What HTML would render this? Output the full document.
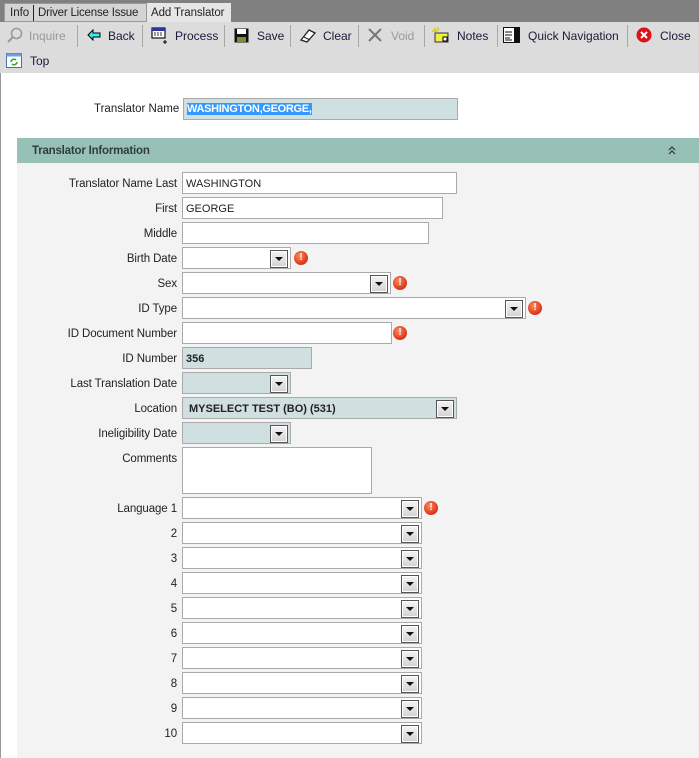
<!DOCTYPE html>
<html><head><meta charset="utf-8"><style>
*{margin:0;padding:0;box-sizing:border-box}
body{width:699px;height:758px;position:relative;background:#fff;font-family:"Liberation Sans",Tahoma,sans-serif;font-size:11.5px;color:#222;overflow:hidden}
.a{position:absolute;white-space:nowrap}
.tb{color:#1a1a3a;font-size:12px;margin-top:1px}
.sep{position:absolute;top:25px;width:1px;height:22px;background:#a8a8a8}
.lbl{position:absolute;right:522px;text-align:right;white-space:nowrap;color:#222;letter-spacing:-0.1px;margin-top:2px}
.f{position:absolute;height:22px;border:1px solid #aaa;background:#fff;padding:5px 0 0 3px;white-space:nowrap;font-size:11px}
.ro{background:#d0dfdf}
.dd::after{content:"";position:absolute;right:2px;top:2px;width:16px;height:16px;border:1px solid #555;box-shadow:inset 0 0 0 1px #fff;background:linear-gradient(#f4f4f4,#d2d2d2)}
.dd::before{content:"";position:absolute;right:7px;top:9px;border-left:4px solid transparent;border-right:4px solid transparent;border-top:4px solid #111;z-index:2}
.w{position:absolute;width:14px;height:14px;border-radius:50%;background:radial-gradient(circle at 40% 35%,#ff8a5a,#d9321a 70%);color:#fff;font-weight:bold;font-size:10px;text-align:center;line-height:14px}
</style></head><body>
<div class="a" style="left:0;top:0;width:699px;height:22px;background:#808080"></div>
<div class="a" style="left:4px;top:3px;width:143px;height:19px;background:#d4d4d4;border:1px solid #999"></div>
<div class="a" style="left:147px;top:3px;width:84px;height:20px;background:#e6e6e6"></div>
<div class="a" style="left:10px;top:7px;color:#222;font-size:11.5px">Info</div>
<div class="a" style="left:33px;top:5px;width:1px;height:16px;background:#222"></div>
<div class="a" style="left:38px;top:7px;color:#222;font-size:11.5px;letter-spacing:-0.2px">Driver License Issue</div>
<div class="a" style="left:151px;top:7px;color:#222;font-size:11.5px;letter-spacing:-0.1px">Add Translator</div>
<div class="a" style="left:0;top:22px;width:699px;height:51px;background:#dcdcdc"></div>
<div class="a" style="left:0;top:73px;width:1px;height:685px;background:#999"></div>
<svg class="a" style="left:7px;top:27px" width="16" height="16"><circle cx="9.5" cy="6.5" r="5" fill="none" stroke="#999" stroke-width="1.5"/><line x1="6" y1="10" x2="1" y2="15" stroke="#999" stroke-width="2"/></svg>
<div class="a tb" style="left:29px;top:28px;color:#999">Inquire</div>
<div class="sep" style="left:77px"></div>
<svg class="a" style="left:87px;top:29px" width="14" height="12"><path d="M1 6 L6 1 V4 H13 V8 H6 V11 Z" fill="#3ee" stroke="#000" stroke-width="1"/></svg>
<div class="a tb" style="left:108px;top:28px">Back</div>
<div class="sep" style="left:142px"></div>
<svg class="a" style="left:151px;top:27px" width="18" height="18"><rect x="1" y="1" width="13" height="10" fill="#fff" stroke="#112" stroke-width="1.2"/><rect x="1" y="1" width="13" height="3" fill="#339"/><path d="M3 6h2M6 6h2M9 6h2M3 8h2M6 8h2M9 8h2" stroke="#333"/><path d="M14 13v4M12 15h4" stroke="#000"/></svg>
<div class="a tb" style="left:175px;top:28px">Process</div>
<div class="sep" style="left:224px"></div>
<svg class="a" style="left:234px;top:28px" width="15" height="15"><rect x="0.5" y="0.5" width="14" height="14" fill="#111"/><rect x="3" y="1" width="9" height="5" fill="#fff"/><rect x="3" y="9" width="9" height="5" fill="#883"/></svg>
<div class="a tb" style="left:257px;top:28px">Save</div>
<div class="sep" style="left:290px"></div>
<svg class="a" style="left:299px;top:28px" width="18" height="15"><path d="M2 12 L10 2 L16 5 L8 14 Z" fill="#fff" stroke="#222" stroke-width="1.3"/><path d="M5 9 L11 12" stroke="#222"/></svg>
<div class="a tb" style="left:323px;top:28px">Clear</div>
<div class="sep" style="left:358px"></div>
<svg class="a" style="left:368px;top:28px" width="14" height="14"><path d="M1 1L13 13M13 1L1 13" stroke="#777" stroke-width="2"/></svg>
<div class="a tb" style="left:391px;top:28px;color:#999">Void</div>
<div class="sep" style="left:424px"></div>
<svg class="a" style="left:432px;top:27px" width="17" height="17"><rect x="3" y="6" width="13" height="9" fill="#ee4" stroke="#333"/><path d="M2 1L5 5M6 0V4M0 4H4" stroke="#cc0" stroke-width="1.3"/><rect x="11" y="10" width="4" height="4" fill="#fff" stroke="#000"/></svg>
<div class="a tb" style="left:457px;top:28px">Notes</div>
<div class="sep" style="left:497px"></div>
<svg class="a" style="left:503px;top:27px" width="18" height="17"><rect x="0.5" y="0.5" width="16" height="15" fill="#fff" stroke="#111"/><rect x="11" y="1" width="5" height="14" fill="#111"/><path d="M2 5h7M2 8h7M2 11h5M2 13h7" stroke="#111"/></svg>
<div class="a tb" style="left:528px;top:28px;letter-spacing:0px">Quick Navigation</div>
<div class="sep" style="left:627px"></div>
<svg class="a" style="left:636px;top:27px" width="16" height="16"><circle cx="8" cy="8" r="7.5" fill="#e01018"/><path d="M5 5L11 11M11 5L5 11" stroke="#fff" stroke-width="2"/></svg>
<div class="a tb" style="left:660px;top:28px">Close</div>
<svg class="a" style="left:6px;top:53px" width="16" height="15"><rect x="0.5" y="0.5" width="15" height="14" fill="#fff" stroke="#4870b0"/><rect x="0.5" y="0.5" width="15" height="3" fill="#6fa0e0"/><path d="M5 9a3 3 0 0 1 5-2M11 9a3 3 0 0 1-5 2" stroke="#3a3" stroke-width="1.6" fill="none"/></svg>
<div class="a tb" style="left:30px;top:53px">Top</div>

<div class="a" style="left:94px;top:103px">Translator Name</div>
<div class="f ro" style="left:183px;top:98px;width:275px;padding-top:4px"><span style="background:#3399ff;color:#fff;font-weight:bold;font-size:11px;letter-spacing:-0.3px">WASHINGTON,GEORGE,</span></div>

<div class="a" style="left:17px;top:138px;width:682px;height:620px;background:#f3f3f3"></div>
<div class="a" style="left:17px;top:138px;width:682px;height:25px;background:#97c0b6"></div>
<div class="a" style="left:32px;top:145px;font-weight:bold;color:#2f3f37;letter-spacing:-0.2px">Translator Information</div>
<svg class="a" style="left:668px;top:146px" width="8" height="9"><path d="M1 4L4 1L7 4M1 8L4 5L7 8" stroke="#333" fill="none" stroke-width="1.2"/></svg>

<div class="lbl" style="top:176px">Translator Name Last</div><div class="f" style="left:182px;top:172px;width:275px">WASHINGTON</div>
<div class="lbl" style="top:201px">First</div><div class="f" style="left:182px;top:197px;width:261px">GEORGE</div>
<div class="lbl" style="top:226px">Middle</div><div class="f" style="left:182px;top:222px;width:247px"></div>
<div class="lbl" style="top:251px">Birth Date</div><div class="f dd" style="left:182px;top:247px;width:109px"></div><div class="w" style="left:294px;top:251px">!</div>
<div class="lbl" style="top:276px">Sex</div><div class="f dd" style="left:182px;top:272px;width:209px"></div><div class="w" style="left:393px;top:276px">!</div>
<div class="lbl" style="top:301px">ID Type</div><div class="f dd" style="left:182px;top:297px;width:344px"></div><div class="w" style="left:528px;top:301px">!</div>
<div class="lbl" style="top:326px">ID Document Number</div><div class="f" style="left:182px;top:322px;width:210px"></div><div class="w" style="left:393px;top:326px">!</div>
<div class="lbl" style="top:351px">ID Number</div><div class="f ro" style="left:182px;top:347px;width:130px;font-weight:bold">356</div>
<div class="lbl" style="top:376px">Last Translation Date</div><div class="f dd ro" style="left:182px;top:372px;width:109px"></div>
<div class="lbl" style="top:401px">Location</div><div class="f dd ro" style="left:182px;top:397px;width:275px;font-weight:bold;padding-left:6px">MYSELECT TEST (BO) (531)</div>
<div class="lbl" style="top:426px">Ineligibility Date</div><div class="f dd ro" style="left:182px;top:422px;width:109px"></div>
<div class="lbl" style="top:451px">Comments</div><div class="f" style="left:182px;top:447px;width:190px;height:47px"></div>
<div class="lbl" style="top:501px">Language 1</div><div class="f dd" style="left:182px;top:497px;width:240px"></div><div class="w" style="left:424px;top:501px">!</div>
<div class="lbl" style="top:526px">2</div><div class="f dd" style="left:182px;top:522px;width:240px"></div>
<div class="lbl" style="top:551px">3</div><div class="f dd" style="left:182px;top:547px;width:240px"></div>
<div class="lbl" style="top:576px">4</div><div class="f dd" style="left:182px;top:572px;width:240px"></div>
<div class="lbl" style="top:601px">5</div><div class="f dd" style="left:182px;top:597px;width:240px"></div>
<div class="lbl" style="top:626px">6</div><div class="f dd" style="left:182px;top:622px;width:240px"></div>
<div class="lbl" style="top:651px">7</div><div class="f dd" style="left:182px;top:647px;width:240px"></div>
<div class="lbl" style="top:676px">8</div><div class="f dd" style="left:182px;top:672px;width:240px"></div>
<div class="lbl" style="top:701px">9</div><div class="f dd" style="left:182px;top:697px;width:240px"></div>
<div class="lbl" style="top:726px">10</div><div class="f dd" style="left:182px;top:722px;width:240px"></div>
</body></html>
